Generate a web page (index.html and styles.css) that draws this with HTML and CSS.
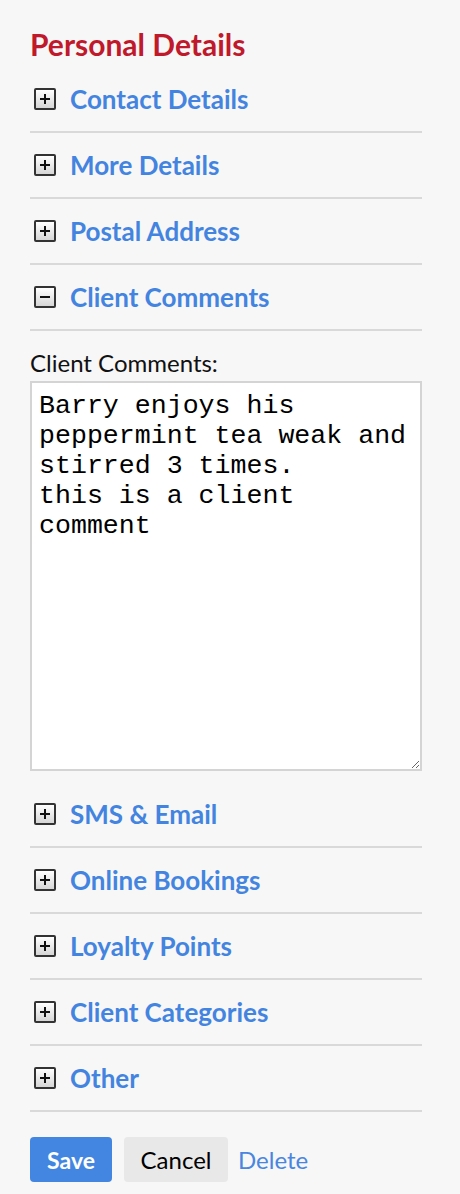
FILE: index.html
```html
<!doctype html>
<html lang="en">
<head>
  <meta charset="utf-8">
  <title>Personal Details</title>
  <link rel="stylesheet" href="styles.css">
</head>
<body>
  <div class="panel">
    <h2 class="title">Personal Details</h2>

    <div class="section"><span class="toggle plus"></span><a class="sectionLink" href="#">Contact Details</a></div>
    <div class="section"><span class="toggle plus"></span><a class="sectionLink" href="#">More Details</a></div>
    <div class="section"><span class="toggle plus"></span><a class="sectionLink" href="#">Postal Address</a></div>
    <div class="section"><span class="toggle minus"></span><a class="sectionLink" href="#">Client Comments</a></div>

    <div class="comments">
      <label for="clientComments">Client Comments:</label>
      <textarea id="clientComments" name="clientComments">Barry enjoys his peppermint tea weak and stirred 3 times.
this is a client comment</textarea>
    </div>

    <div class="section"><span class="toggle plus"></span><a class="sectionLink" href="#">SMS &amp; Email</a></div>
    <div class="section"><span class="toggle plus"></span><a class="sectionLink" href="#">Online Bookings</a></div>
    <div class="section"><span class="toggle plus"></span><a class="sectionLink" href="#">Loyalty Points</a></div>
    <div class="section"><span class="toggle plus"></span><a class="sectionLink" href="#">Client Categories</a></div>
    <div class="section"><span class="toggle plus"></span><a class="sectionLink" href="#">Other</a></div>

    <div class="actions">
      <button class="button save" type="button">Save</button>
      <button class="button cancel" type="button">Cancel</button>
      <a class="deleteLink" href="#">Delete</a>
    </div>
  </div>
</body>
</html>
```

FILE: styles.css
```css
body {
  margin: 0;
  background: #f7f7f7;
  font-family: "Lato", sans-serif;
}
.panel {
  width: 392px;
  padding: 0 0 0 30px;
}
.title {
  margin: 0;
  height: 67px;
  padding-top: 26px;
  box-sizing: border-box;
  font-size: 30px;
  font-weight: bold;
  color: #c0192b;
  line-height: 36px;
}
.section {
  height: 64px;
  border-bottom: 2px solid #d9d9d9;
  display: flex;
  align-items: center;
}
.sectionLink {
  color: #4384e0;
  font-size: 26px;
  font-weight: bold;
  text-decoration: none;
}
.toggle {
  position: relative;
  width: 18px;
  height: 18px;
  margin: 0 14px 0 4px;
  border: 2px solid #333;
  border-radius: 2px;
  background: linear-gradient(#ffffff, #d6d6d6);
}
.toggle::before,
.plus::after {
  content: "";
  position: absolute;
  background: #111;
}
.toggle::before {
  left: 4px;
  top: 8px;
  width: 10px;
  height: 2px;
}
.plus::after {
  left: 8px;
  top: 4px;
  width: 2px;
  height: 10px;
}
.comments {
  padding-top: 17px;
}
.comments label {
  display: block;
  font-size: 24px;
  color: #111;
  line-height: 30px;
  margin-bottom: 3px;
}
.comments textarea {
  display: block;
  width: 392px;
  height: 390px;
  box-sizing: border-box;
  margin: 0 0 11px 0;
  padding: 8px 7px;
  border: 2px solid #d4d4d4;
  background: #fff;
  font-family: "Liberation Mono", monospace;
  font-size: 26.6px;
  line-height: 30px;
  color: #000;
  resize: vertical;
}
.actions {
  display: flex;
  align-items: center;
  padding-top: 25px;
}
.button {
  height: 45px;
  border: none;
  border-radius: 4px;
  font-family: "Lato", sans-serif;
  font-size: 24px;
  padding: 0;
  margin-right: 12px;
}
.save {
  width: 82px;
  background: #4286e2;
  color: #fff;
  font-weight: bold;
  font-size: 23px;
}
.cancel {
  width: 104px;
  background: #e8e8e8;
  color: #000;
  margin-right: 10px;
}
.deleteLink {
  color: #4a86e0;
  font-size: 24px;
  text-decoration: none;
}
```
